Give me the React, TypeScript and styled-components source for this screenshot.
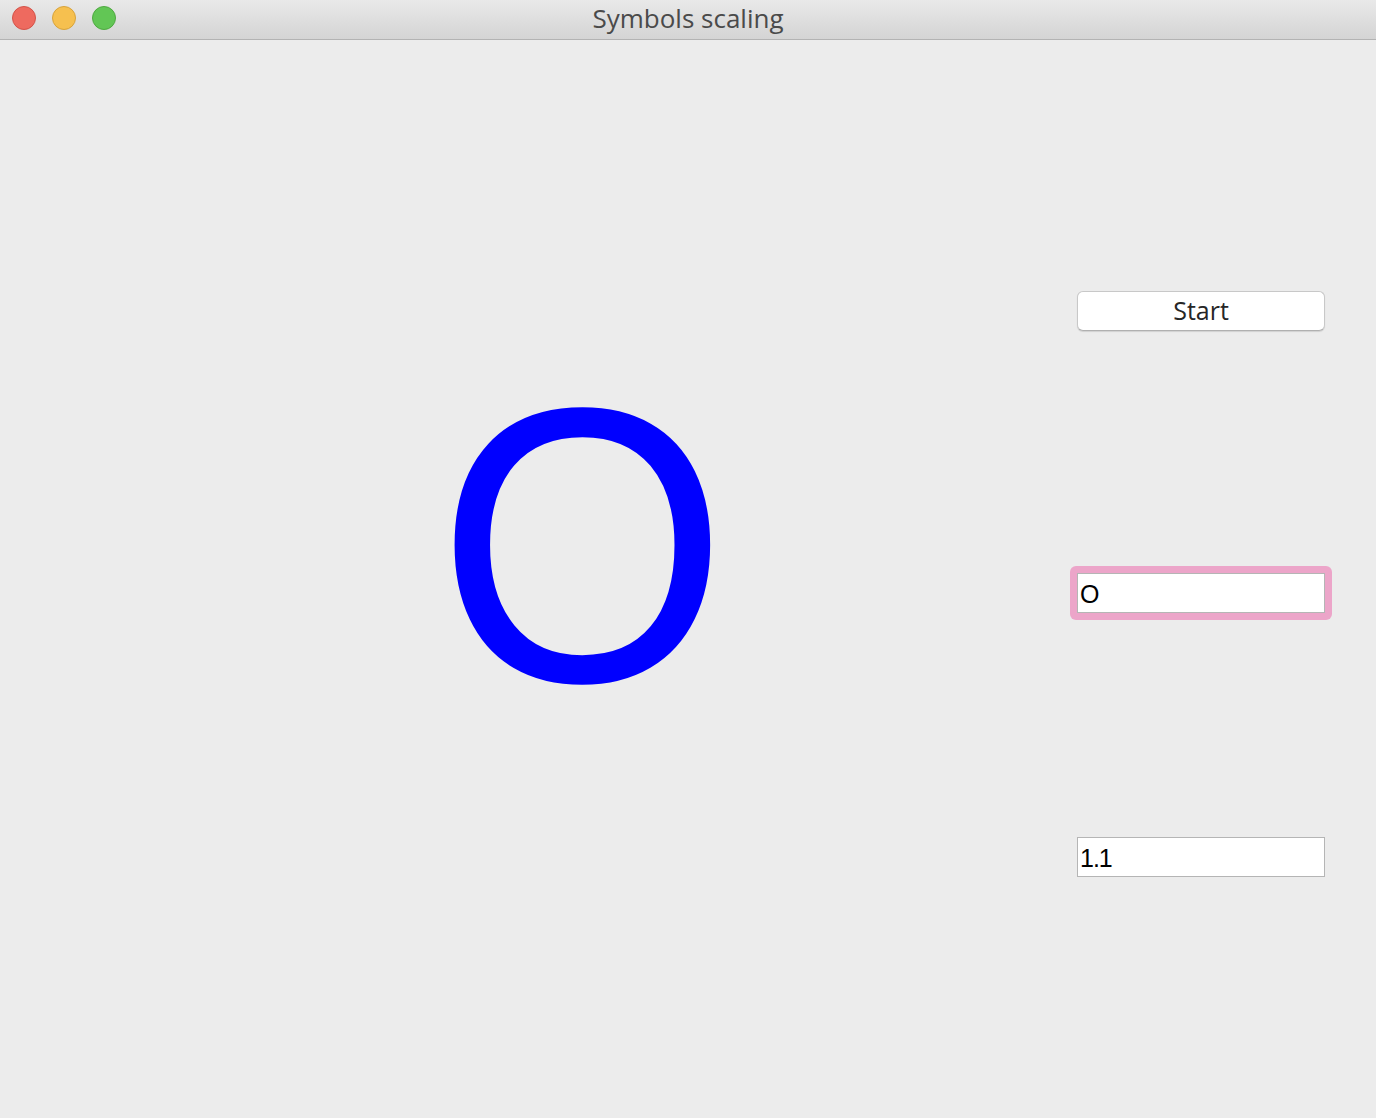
import React from "react";
import styled, { createGlobalStyle } from "styled-components";

const Global = createGlobalStyle`
  html, body { margin: 0; padding: 0; background: #ececec; }
  body { font-family: "Liberation Sans", Arial, sans-serif; }
`;

const Window = styled.div`
  width: 1376px;
  height: 1118px;
  display: flex;
  flex-direction: column;
  background: #ececec;
  overflow: hidden;
`;

const TitleBar = styled.div`
  height: 39px;
  flex: 0 0 auto;
  border-bottom: 1px solid #b3b3b3;
  background: linear-gradient(#e9e9e9, #d4d4d4);
  position: relative;
  display: flex;
  align-items: center;
  justify-content: center;
`;

const Lights = styled.div`
  position: absolute;
  left: 12px;
  top: 6px;
  display: flex;
  gap: 16px;
`;

const Light = styled.span<{ $fill: string; $edge: string }>`
  width: 24px;
  height: 24px;
  border-radius: 50%;
  box-sizing: border-box;
  background: ${(p) => p.$fill};
  border: 1px solid ${(p) => p.$edge};
`;

const Title = styled.div`
  font-family: "Open Sans", "Liberation Sans", sans-serif;
  font-size: 26px;
  color: #4a4a4a;
  margin-top: -3px;
`;

const Body = styled.div`
  flex: 1;
  display: flex;
`;

const Stage = styled.div`
  flex: 1;
  padding-left: 88px;
  display: flex;
  align-items: center;
  justify-content: center;
`;

const Symbol = styled.div`
  font-family: "Liberation Sans", Arial, sans-serif;
  font-size: 392px;
  line-height: 1;
  color: #0000ff;
  margin-top: -68px;
  transform: scaleX(0.955);
`;

const Controls = styled.div`
  width: 248px;
  margin-right: 51px;
  display: flex;
  flex-direction: column;
  padding-top: 251px;
`;

const StartButton = styled.button`
  height: 40px;
  box-sizing: border-box;
  background: #ffffff;
  border: 1px solid #c8c8c8;
  border-bottom-color: #b0b0b0;
  border-radius: 6px;
  box-shadow: 0 1px 1px rgba(0, 0, 0, 0.12);
  font-family: "Open Sans", "Liberation Sans", sans-serif;
  font-size: 25px;
  color: #262626;
  padding: 0 0 2px;
`;

const FocusRing = styled.div<{ $top: number }>`
  margin-top: ${(p) => p.$top}px;
  margin-left: -7px;
  margin-right: -7px;
  padding: 7px;
  border-radius: 6px;
  background: #eca5c9;
  display: flex;
  flex-direction: column;
`;

const PlainField = styled.input`
  height: 40px;
  box-sizing: border-box;
  background: #ffffff;
  border: 1px solid #b5b5b5;
  padding: 2px 2px 0;
  font-family: "Liberation Sans", Arial, sans-serif;
  font-size: 25px;
  letter-spacing: -1px;
  color: #000000;
  outline: none;
  width: 100%;
`;

const SpacedField = styled(PlainField)<{ $top: number }>`
  margin-top: ${(p) => p.$top}px;
`;

export default function App() {
  return (
    <>
      <Global />
      <Window>
        <TitleBar>
          <Lights>
            <Light $fill="#ee6a5f" $edge="#d35349" />
            <Light $fill="#f6c04f" $edge="#d7a33c" />
            <Light $fill="#62c655" $edge="#4fa941" />
          </Lights>
          <Title>Symbols scaling</Title>
        </TitleBar>
        <Body>
          <Stage>
            <Symbol>O</Symbol>
          </Stage>
          <Controls>
            <StartButton>Start</StartButton>
            <FocusRing $top={235}>
              <PlainField defaultValue="O" readOnly />
            </FocusRing>
            <SpacedField $top={217} defaultValue="1.1" readOnly />
          </Controls>
        </Body>
      </Window>
    </>
  );
}
